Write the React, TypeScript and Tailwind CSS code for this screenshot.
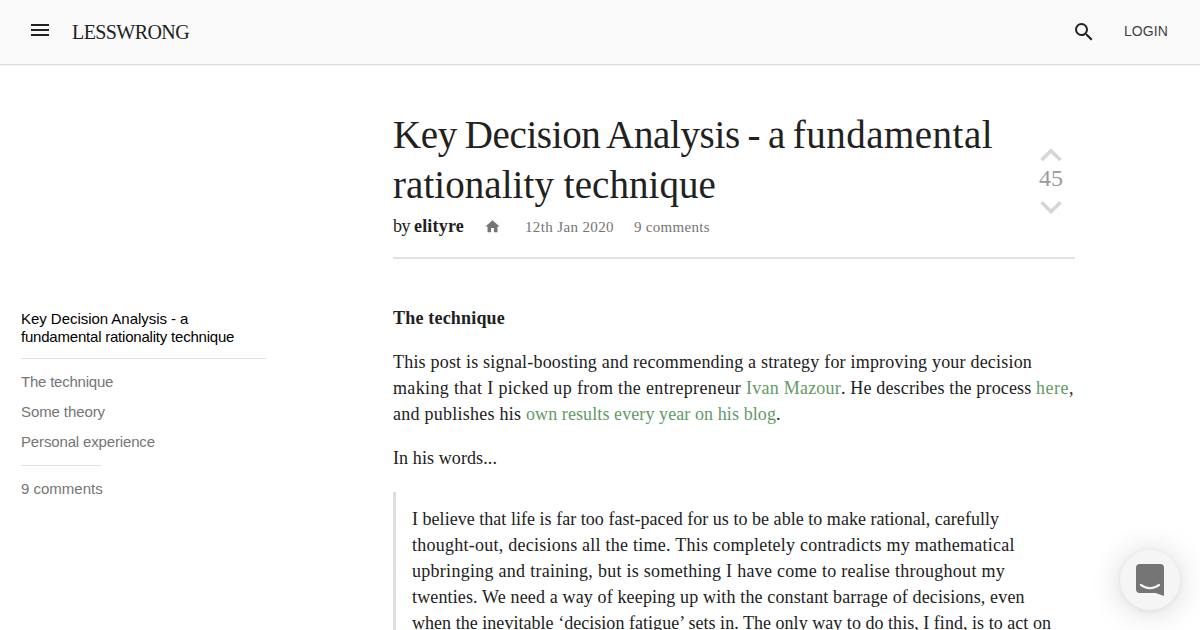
import { MdHome, MdMenu, MdSearch } from "react-icons/md";

const Header = () => {
  return (
    <header className="flex h-[65px] items-center border-b border-[#dfdfdf] bg-[#fafafa] pl-7 pr-8 shadow-[0_1px_1px_rgba(0,0,0,0.05)]">
      <button aria-label="Menu" className="-mt-1">
        <MdMenu className="size-6 text-[#212121]" />
      </button>
      <a className="ml-5 text-xl tracking-[-0.58px] text-[#212121]">LESSWRONG</a>
      <button aria-label="Search" className="ml-auto">
        <MdSearch className="size-6 text-[#212121]" />
      </button>
      <a className="-mt-0.5 ml-7 font-['Liberation_Sans',Arial,sans-serif] text-sm tracking-[0.1px] text-[#424242]">
        LOGIN
      </a>
    </header>
  );
};

const TableOfContents = () => {
  return (
    <nav className="mt-[245px] ml-[21px] w-[245px] shrink-0 font-['Liberation_Sans',Arial,sans-serif] text-[15px] leading-[18px] text-[#757575]">
      <p className="border-b border-[#dfdfdf] pb-3 text-black">
        <span className="block tracking-[-0.04px]">Key Decision Analysis - a</span>
        <span className="block tracking-[-0.21px]">fundamental rationality technique</span>
      </p>
      <ul className="mt-2">
        <li className="py-1.5 tracking-[-0.22px]">The technique</li>
        <li className="py-1.5 tracking-[-0.1px]">Some theory</li>
        <li className="py-1.5 tracking-[-0.15px]">Personal experience</li>
      </ul>
      <div className="mt-2 w-20 border-t border-[#dfdfdf]" />
      <p className="mt-3.5">9 comments</p>
    </nav>
  );
};

const PostHeader = () => {
  return (
    <div className="flex h-[149px] justify-between border-b-2 border-[#e2e2e2]">
      <div className="whitespace-nowrap">
        <h1 className="text-[39px] leading-[50px]">
          <span className="block">
            <span className="tracking-[-0.36px] [word-spacing:-1.6px]">Key Decision Analysis - a </span>
            <span className="tracking-[0.5px]">fundamental</span>
          </span>
          <span className="block tracking-[0.06px]">rationality technique</span>
        </h1>
        <div className="mt-[3px] flex items-baseline text-[15px] leading-[26px] text-[#757575]">
          <p className="text-lg leading-[26px] text-[#212121]">
            <span className="tracking-[-0.5px]">by </span>
            <b className="tracking-[0.19px]">elityre</b>
          </p>
          <MdHome className="ml-5 size-[17px] self-center" />
          <span className="ml-6 tracking-[0.37px]">12th Jan 2020</span>
          <span className="ml-5 tracking-[0.31px]">9 comments</span>
        </div>
      </div>
      <div className="mt-[38px] mr-3 flex w-6 flex-col items-center text-2xl leading-6 text-[#9a9a9a]">
        <svg viewBox="0 0 22 13" className="h-[13px] w-[22px] text-[#d6d6d6]">
          <path d="M1.5 12 11 2.700l9.500 9.300" fill="none" stroke="currentColor" strokeWidth="3.600" />
        </svg>
        <span className="mt-[5px]">45</span>
        <svg viewBox="0 0 22 13" className="mt-[11px] h-[13px] w-[22px] text-[#d6d6d6]">
          <path d="M1.500 1.300 11 10.600l9.500-9.300" fill="none" stroke="currentColor" strokeWidth="3.600" />
        </svg>
      </div>
    </div>
  );
};

const PostBody = () => {
  return (
    <div className="mt-[46px] space-y-[18px] text-lg leading-[26px] whitespace-nowrap">
      <h2 className="font-bold tracking-[0.19px]">The technique</h2>
      <p>
        <span className="block tracking-[0.198px]">
          This post is signal-boosting and recommending a strategy for improving your decision
        </span>
        <span className="block">
          <span className="tracking-[0.351px]">making that I picked up from the entrepreneur </span>
          <a className="tracking-[0.231px] text-[#5f9b65]">Ivan Mazour</a>
          <span className="tracking-[0.151px]">. He describes the process </span>
          <a className="tracking-[0.507px] text-[#5f9b65]">here</a>,
        </span>
        <span className="block">
          <span className="tracking-[0.25px]">and publishes his </span>
          <a className="tracking-[0.09px] text-[#5f9b65]">own results every year on his blog</a>.
        </span>
      </p>
      <p className="tracking-[0.1px]">In his words...</p>
      <blockquote className="mt-[21px] border-l-3 border-[#dddddd] py-[14px] pl-4">
        <span className="block tracking-[0.032px]">
          I believe that life is far too fast-paced for us to be able to make rational, carefully
        </span>
        <span className="block tracking-[0.245px]">
          thought-out, decisions all the time. This completely contradicts my mathematical
        </span>
        <span className="block tracking-[0.277px]">
          upbringing and training, but is something I have come to realise throughout my
        </span>
        <span className="block tracking-[0.142px]">
          twenties. We need a way of keeping up with the constant barrage of decisions, even
        </span>
        <span className="block tracking-[0.035px]">
          when the inevitable ‘decision fatigue’ sets in. The only way to do this, I find, is to act on
        </span>
      </blockquote>
    </div>
  );
};

const ChatLauncher = () => {
  return (
    <button
      aria-label="Open chat"
      className="absolute right-5 bottom-5 flex size-[60px] items-center justify-center rounded-full bg-[#f5f5f5] shadow-[0_1px_6px_rgba(0,0,0,0.06),0_2px_32px_rgba(0,0,0,0.16)]"
    >
      <svg viewBox="0 0 28 32" className="h-8 w-7">
        <path
          d="M28 32s-4.700-1.900-8.500-3H3.400C1.500 29 0 27.500 0 25.600V3.400C0 1.500 1.500 0 3.400 0h21.200C26.500 0 28 1.500 28 3.400V32z"
          fill="#757575"
        />
        <path d="M4.800 20.900c5.300 4.300 13.100 4.300 18.400 0" fill="none" stroke="#f5f5f5" strokeWidth="2" strokeLinecap="round" />
      </svg>
    </button>
  );
};

export default function App() {
  return (
    <div className="relative h-[630px] overflow-hidden bg-white font-['Liberation_Serif','Times_New_Roman',serif] text-[#212121]">
      <Header />
      <div className="flex">
        <TableOfContents />
        <main className="mt-[45px] ml-[127px] w-[682px]">
          <PostHeader />
          <PostBody />
        </main>
      </div>
      <ChatLauncher />
    </div>
  );
}
